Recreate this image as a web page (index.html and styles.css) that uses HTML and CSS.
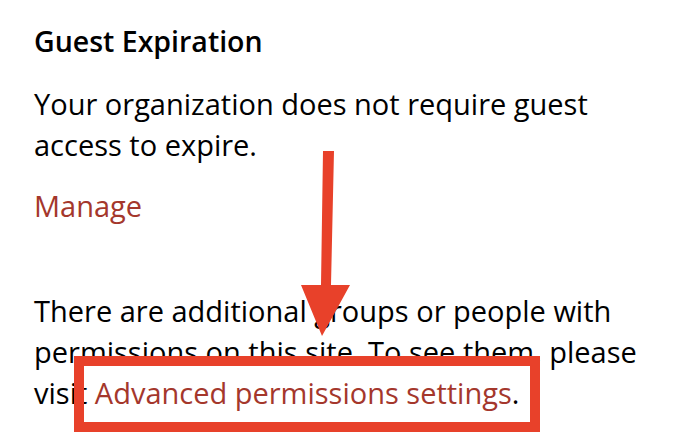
FILE: index.html
```html
<!DOCTYPE html>
<html lang="en">
<head>
  <meta charset="UTF-8">
  <meta name="viewport" content="width=device-width, initial-scale=1.0">
  <title>Site permissions</title>
  <link rel="stylesheet" href="styles.css">
</head>
<body>
  <main class="panel">
    <h2 class="section-title">Guest Expiration</h2>
    <p class="note">Your organization does not require guest access to expire.</p>
    <a class="link manage-link" href="#">Manage</a>
    <p class="note extra-note">There are additional groups or people with permissions on this site. To see them, please visit <a class="link" href="#">Advanced permissions settings</a>.</p>
  </main>

  <!-- callout drawn on top of the panel -->
  <svg class="callout" width="686" height="448" viewBox="0 0 686 448">
    <polygon points="323,151 334,151 331,285 350,285 322,336 301,285 321,285" fill="#e8412a"/>
    <rect x="79" y="361" width="456" height="66" fill="none" stroke="#e8412a" stroke-width="10"/>
  </svg>
</body>
</html>
```

FILE: styles.css
```css
body {
  margin: 0;
  background-color: #fff;
  color: #000;
  font-family: "Open Sans", "Noto Sans", sans-serif;
  position: relative;
  width: 686px;
  height: 448px;
  overflow: hidden;
}

.panel {
  display: flex;
  flex-direction: column;
  align-items: flex-start;
  width: 625px;
  padding: 21px 0 0 34px;
}

.section-title {
  margin: 0 0 22px;
  font-size: 28.5px;
  line-height: 40px;
  font-weight: 600;
}

.note {
  margin: 0;
  font-size: 29px;
  line-height: 41px;
}

.link {
  color: #a4372c;
  text-decoration: none;
}

.manage-link {
  margin-top: 20px;
  font-size: 29px;
  line-height: 41px;
}

.extra-note {
  margin-top: 64px;
}

.callout {
  position: absolute;
  top: 0;
  left: 0;
  pointer-events: none;
}
```
